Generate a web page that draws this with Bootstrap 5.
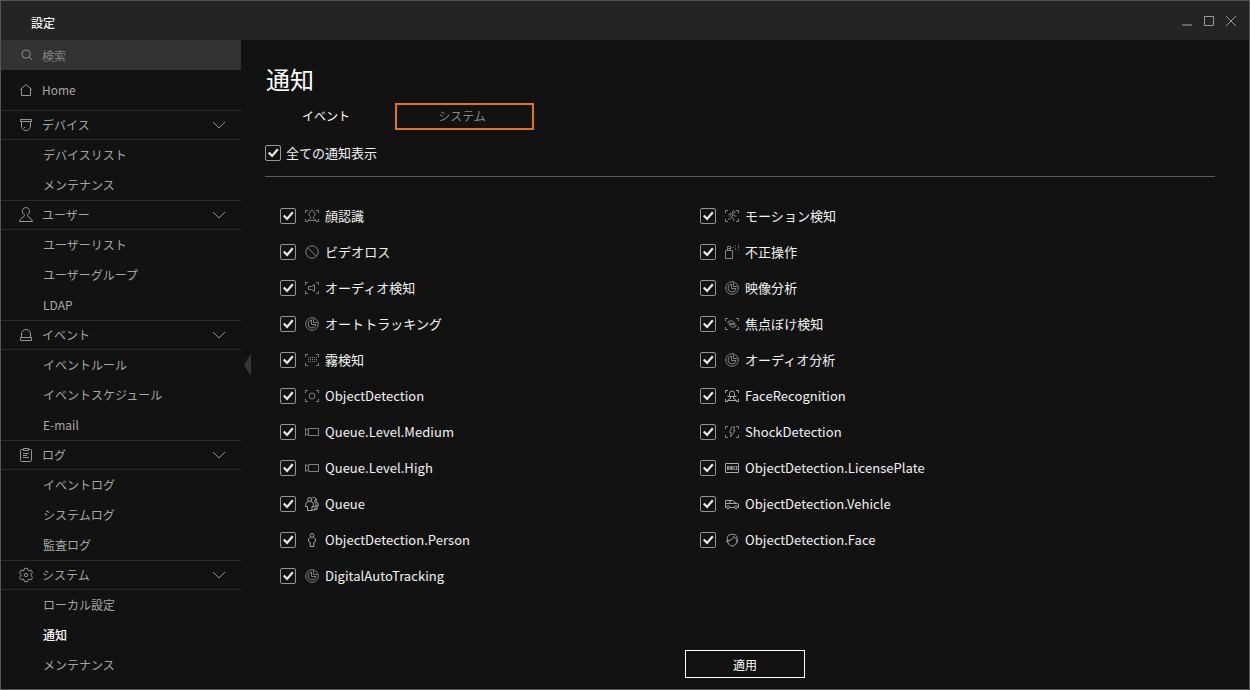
<!DOCTYPE html>
<html lang="ja" data-bs-theme="dark">
<head>
<meta charset="utf-8">
<meta name="viewport" content="width=device-width, initial-scale=1">
<title>設定</title>
<link href="https://cdn.jsdelivr.net/npm/bootstrap@5.3.0/dist/css/bootstrap.min.css" rel="stylesheet">
<style>
  body { font-family: "Noto Sans CJK JP", sans-serif; font-size: 12px; line-height: 18px; background: #121212; color: #f2f2f2; }
  .window { height: 690px; border: 1px solid #555; overflow: hidden; }
  .titlebar { height: 39px; background: #242424; padding: 4px 12px 0 30px; }
  .titlebar svg { width: 12px; height: 12px; margin-top: -3px; }
  .sidebar { width: 240px; color: #a6a6a6; }
  .search { height: 30px; background: #333; color: #828282; padding-top: 1px; }
  .search .ico { margin: -3px 0 0 1px; width: 15px; height: 15px; }
  .home { height: 40px; }
  .search, .home, .group-head { padding-left: 17px; }
  .group-head { height: 30px; border-top: 1px solid #2a2a2a; border-bottom: 1px solid #2a2a2a; padding-right: 14px; }
  .sub { height: 30px; padding: 0 0 0 42px; line-height: 30px; color: #a6a6a6; }
  .sub.active { color: #fff; font-weight: 500; }
  .ico { width: 16px; height: 16px; fill: none; stroke: #969696; stroke-width: 1; flex: none; }
  .page { position: relative; padding: 24px 34px 0 24px; }
  .handle { position: absolute; left: 3px; top: 314px; width: 7px; height: 22px; background: #363636; clip-path: polygon(0 50%, 100% 0, 100% 100%); }
  h1 { font-size: 24px; line-height: 30px; font-weight: 400; margin: 0 0 9px 1px; }
  .tabs { margin-left: -9px; }
  .tabs .nav-link { width: 139px; height: 27px; padding: 0 0 0 1px; line-height: 25px; text-align: center; color: #fff; border-radius: 0; font-weight: 400; }
  .tabs .nav-link.picked { border: 2px solid #e3740f; line-height: 21px; color: #858585; padding: 0 5px 0 0; }
  .check-all { height: 47px; padding-bottom: 1px; border-bottom: 1px solid #5b5b5b; font-size: 13px; }
  .check-all span { padding-left: 5px; }
  .form-check-input { width: 16px; height: 16px; margin: 0; border: 1px solid #969696; border-radius: 2px !important; background-color: #121212 !important; flex: none; }
  .form-check-input:checked { border-color: #969696; background-size: 16px 16px; background-position: -1px -1px; background-image: url("data:image/svg+xml,%3csvg xmlns='http://www.w3.org/2000/svg' viewBox='0 0 16 16'%3e%3cpath d='M3.700 7.500l3.400 3.400 5.700-6.600' fill='none' stroke='%23e6e6e6' stroke-width='2.300'/%3e%3c/svg%3e"); }
  .events { padding: 21px 0 0 15px; font-size: 13px; }
  .event-col { width: 420px; }
  .event { height: 36px; letter-spacing: .045px; }
  .event .ico { margin: 0 5px 0 8px; stroke: #808080; }
  .event .ico.bright { stroke: #a8a8a8; }
  .apply { width: 120px; height: 28px; padding: 0; line-height: 27px; border: 1px solid #fff; border-radius: 0; color: #fff; font-size: 12px; margin: 56px 0 0 420px; }
</style>
</head>
<body>
<svg class="d-none">
  <symbol id="home" viewBox="0 0 16 16"><path d="M2.300 7.500L8 2.500l5.700 5M3.500 6.500v7h9v-7"/></symbol>
  <symbol id="device" viewBox="0 0 16 16"><path d="M2.500 2.500h11v2h-11zM3.500 4.500v4.500a4.500 4.500 0 0 0 9 0V4.500M6 10.500h1"/></symbol>
  <symbol id="user" viewBox="0 0 16 16"><path d="M6.500 8.500V7.700a3.700 3.700 0 1 1 3 0v.8c.3 2 4.700 2.500 5 6h-13c.3-3.500 4.700-4 5-6z"/></symbol>
  <symbol id="alarm" viewBox="0 0 16 16"><path d="M3.500 10.500V7a4.500 4.500 0 0 1 9 0v3.500M2.500 10.500h11v3h-11z"/></symbol>
  <symbol id="log" viewBox="0 0 16 16"><path d="M5 2.500H3.500a1 1 0 0 0-1 1v10a1 1 0 0 0 1 1h9a1 1 0 0 0 1-1v-10a1 1 0 0 0-1-1H11M5.500 1.500h5v2h-5zM5 6.500h6M5 8.500h4M5 10.500h6"/></symbol>
  <symbol id="gear" viewBox="0 0 16 16"><path d="M6.500 1.300h3l.5 1.900 1.100.6 1.900-.7 1.600 2.600-1.500 1.400v1.800l1.500 1.400-1.600 2.600-1.900-.7-1.100.6-.5 1.900h-3L6 12.800l-1.100-.6-1.900.7-1.600-2.600 1.500-1.400V7.100L1.400 5.700 3 3.100l1.900.7L6 3.200z"/><circle cx="8" cy="8" r="1.700"/></symbol>
  <symbol id="search" viewBox="0 0 16 16"><circle cx="7.500" cy="7.500" r="4.300"/><path d="M10.700 10.700l3.300 3.300"/></symbol>
  <symbol id="chev" viewBox="0 0 16 16"><path d="M2 5l6 6 6-6"/></symbol>
  <symbol id="frame" viewBox="0 0 16 16"><path d="M4 2.500H1.500V5M12 2.500h2.500V5M1.500 11v2.500H4M14.500 11v2.500H12M1.500 7.200v1.600M14.500 7.200v1.600"/></symbol>
  <symbol id="corners" viewBox="0 0 16 16"><path d="M4 2.500H1.500V5M12 2.500h2.500V5M1.500 11v2.500H4M14.500 11v2.500H12"/></symbol>
  <symbol id="face" viewBox="0 0 16 16"><use href="#corners"/><path d="M6.700 9a3 3.300 0 1 1 2.600 0v1c0 .8 2.200.8 2.700 2.500H4c.5-1.700 2.700-1.700 2.700-2.500z"/></symbol>
  <symbol id="loss" viewBox="0 0 16 16"><circle cx="8" cy="8" r="6.200"/><path d="M3.600 3.600l8.800 8.800"/></symbol>
  <symbol id="audio" viewBox="0 0 16 16"><use href="#corners"/><path d="M10.500 4.500v7L7.500 9.500h-3v-3h3z"/></symbol>
  <symbol id="track" viewBox="0 0 16 16"><circle cx="8" cy="8" r="6.300"/><path d="M7.500 4a4 4 0 1 0 4.500 4.500H7.500zM9.500 2.500v4H13.500"/></symbol>
  <symbol id="fog" viewBox="0 0 16 16"><use href="#corners"/><path d="M4 5.500h9M4 7.500h9M4 9.500h9" stroke-dasharray="1 1"/></symbol>
  <symbol id="object" viewBox="0 0 16 16"><use href="#corners"/><circle cx="8" cy="8" r="2.900"/></symbol>
  <symbol id="camera" viewBox="0 0 16 16"><path d="M4.500 4.500h10v7h-10zM4.500 6.500l-3-2v7l3-2"/></symbol>
  <symbol id="queue" viewBox="0 0 16 16"><circle cx="5.700" cy="3.500" r="2"/><path d="M4.500 5.500c-2.300.5-3 2-3 5h2v4h4.500v-4h1.500c0-3-.5-4.500-2.500-5M8 2.200a2 2 0 1 1 2.200 3M10 5.500c1.800.5 2.300 2.300 2.200 4.500H11v4H8M11 2.300c1.600 0 2 2 1 3 1.900 1 2.400 3 2.200 4.700H13v3.500h-2"/></symbol>
  <symbol id="person" viewBox="0 0 16 16"><circle cx="8" cy="3.500" r="1.900"/><path d="M6.500 5.500C5 6 4.500 7 4.500 9.500l1.700 1v4h3.600v-4l1.700-1c0-2.500-.5-3.500-2-4"/></symbol>
  <symbol id="motion" viewBox="0 0 16 16"><use href="#corners"/><circle cx="9.700" cy="4.200" r="1.300"/><path d="M4.500 6.500L7 5.500l2 1-1.500 2.800 2.200 1.200v2.500M7.500 9.500l-1 1.500H4M9 6.500l1.500 1.500h2M6.500 6.500L5.700 8.700"/></symbol>
  <symbol id="spray" viewBox="0 0 16 16"><path d="M1.500 6.500h7v8h-7zM3.500 6.500v-4h3v4M3.500 4.500h3"/><path d="M8.500 3.500h1.200M11 2h1M11 5h1M14 1.500h1M14 3.500h1M14 5.700h1"/></symbol>
  <symbol id="defocus" viewBox="0 0 16 16"><use href="#corners"/><path d="M3.500 6.500C5 4 9 4 11 7.500H7.500L3.500 6.500M5 8.500h3.500l4 1C11 12 7 12 5 8.500"/></symbol>
  <symbol id="recog" viewBox="0 0 16 16"><use href="#corners"/><path d="M5.500 8V5.500a2.500 2.500 0 0 1 5 0V8M3.500 8.500h9M6.500 8.500v2c-1.500.5-2.500 1-3 2h9c-.5-1-1.500-1.500-3-2v-2"/></symbol>
  <symbol id="shock" viewBox="0 0 16 16"><use href="#corners"/><path d="M7.500 3h3.200L9.500 6.500H11L6.500 13l.7-4.500H5.800z"/></symbol>
  <symbol id="plate" viewBox="0 0 16 16"><path d="M1.500 3.500h13v9h-13z"/><path d="M3.500 10V6.500H5V10M3.500 8.500H5M6.700 6.500v3h1.600v-3zM6.500 8H8M10 6V10M11.500 6.500H13v1.500L11.500 9.500H13.500"/></symbol>
  <symbol id="car" viewBox="0 0 16 16"><path d="M2.500 11.500h-1V4.500H9l2.500 2.500 3 1v3.500h-1M5.500 11.500h5M1.500 7.500H12M6 4.500v3"/><circle cx="4" cy="11.300" r="1.500"/><circle cx="12" cy="11.300" r="1.500"/></symbol>
  <symbol id="head" viewBox="0 0 16 16"><path d="M3.500 8C2.500 4 5 2.300 8.500 2.300S13.500 4 13 8c-.3 3.500-2 6-4.700 6S4 11.500 3.500 8zM4 8.500c3 0 5-1.500 6-4 .7 1.500 1.500 2 2.500 2.500M3.500 8c-1.200.8-.7 2.500.6 3M13 8c1.200.8.5 2.500-.7 3"/></symbol>
</svg>

<div class="window d-flex flex-column">
  <header class="titlebar d-flex align-items-center">
    <span class="me-auto fw-medium">設定</span>
    <div class="d-flex" style="gap:10px">
      <svg viewBox="0 0 12 12"><path d="M1 9h10v2H1z" fill="#666"/></svg>
      <svg viewBox="0 0 12 12"><path d="M1.500 1.500h9v9h-9z" fill="none" stroke="#999"/></svg>
      <svg viewBox="0 0 12 12"><path d="M1 1l10 10M11 1L1 11" fill="none" stroke="#999"/></svg>
    </div>
  </header>
  <div class="d-flex flex-grow-1">
    <nav class="sidebar flex-shrink-0">
      <div class="search d-flex align-items-center gap-2"><svg class="ico"><use href="#search"/></svg>検索</div>
      <div class="home d-flex align-items-center gap-2"><svg class="ico"><use href="#home"/></svg>Home</div>
      <div class="group-head d-flex align-items-center gap-2"><svg class="ico"><use href="#device"/></svg><span>デバイス</span><svg class="ico ms-auto"><use href="#chev"/></svg></div>
      <a class="nav-link sub">デバイスリスト</a><a class="nav-link sub">メンテナンス</a>
      <div class="group-head d-flex align-items-center gap-2"><svg class="ico"><use href="#user"/></svg><span>ユーザー</span><svg class="ico ms-auto"><use href="#chev"/></svg></div>
      <a class="nav-link sub">ユーザーリスト</a><a class="nav-link sub">ユーザーグループ</a><a class="nav-link sub">LDAP</a>
      <div class="group-head d-flex align-items-center gap-2"><svg class="ico"><use href="#alarm"/></svg><span>イベント</span><svg class="ico ms-auto"><use href="#chev"/></svg></div>
      <a class="nav-link sub">イベントルール</a><a class="nav-link sub">イベントスケジュール</a><a class="nav-link sub">E-mail</a>
      <div class="group-head d-flex align-items-center gap-2"><svg class="ico"><use href="#log"/></svg><span>ログ</span><svg class="ico ms-auto"><use href="#chev"/></svg></div>
      <a class="nav-link sub">イベントログ</a><a class="nav-link sub">システムログ</a><a class="nav-link sub">監査ログ</a>
      <div class="group-head d-flex align-items-center gap-2"><svg class="ico"><use href="#gear"/></svg><span>システム</span><svg class="ico ms-auto"><use href="#chev"/></svg></div>
      <a class="nav-link sub">ローカル設定</a><a class="nav-link sub active">通知</a><a class="nav-link sub">メンテナンス</a>
    </nav>
    <main class="page flex-grow-1">
      <div class="handle"></div>
      <h1>通知</h1>
      <div class="nav tabs"><a class="nav-link">イベント</a><a class="nav-link picked">システム</a></div>
      <label class="check-all d-flex align-items-center"><input class="form-check-input" type="checkbox" checked><span>全ての通知表示</span></label>
      <div class="events d-flex">
        <div class="event-col">
          <label class="event d-flex align-items-center"><input class="form-check-input" type="checkbox" checked><svg class="ico"><use href="#face"/></svg>顔認識</label>
          <label class="event d-flex align-items-center"><input class="form-check-input" type="checkbox" checked><svg class="ico"><use href="#loss"/></svg>ビデオロス</label>
          <label class="event d-flex align-items-center"><input class="form-check-input" type="checkbox" checked><svg class="ico"><use href="#audio"/></svg>オーディオ検知</label>
          <label class="event d-flex align-items-center"><input class="form-check-input" type="checkbox" checked><svg class="ico"><use href="#track"/></svg>オートトラッキング</label>
          <label class="event d-flex align-items-center"><input class="form-check-input" type="checkbox" checked><svg class="ico"><use href="#fog"/></svg>霧検知</label>
          <label class="event d-flex align-items-center"><input class="form-check-input" type="checkbox" checked><svg class="ico"><use href="#object"/></svg>ObjectDetection</label>
          <label class="event d-flex align-items-center"><input class="form-check-input" type="checkbox" checked><svg class="ico"><use href="#camera"/></svg>Queue.Level.Medium</label>
          <label class="event d-flex align-items-center"><input class="form-check-input" type="checkbox" checked><svg class="ico"><use href="#camera"/></svg>Queue.Level.High</label>
          <label class="event d-flex align-items-center"><input class="form-check-input" type="checkbox" checked><svg class="ico bright"><use href="#queue"/></svg>Queue</label>
          <label class="event d-flex align-items-center"><input class="form-check-input" type="checkbox" checked><svg class="ico bright"><use href="#person"/></svg>ObjectDetection.Person</label>
          <label class="event d-flex align-items-center"><input class="form-check-input" type="checkbox" checked><svg class="ico"><use href="#track"/></svg>DigitalAutoTracking</label>
        </div>
        <div class="event-col">
          <label class="event d-flex align-items-center"><input class="form-check-input" type="checkbox" checked><svg class="ico"><use href="#motion"/></svg>モーション検知</label>
          <label class="event d-flex align-items-center"><input class="form-check-input" type="checkbox" checked><svg class="ico"><use href="#spray"/></svg>不正操作</label>
          <label class="event d-flex align-items-center"><input class="form-check-input" type="checkbox" checked><svg class="ico"><use href="#track"/></svg>映像分析</label>
          <label class="event d-flex align-items-center"><input class="form-check-input" type="checkbox" checked><svg class="ico"><use href="#defocus"/></svg>焦点ぼけ検知</label>
          <label class="event d-flex align-items-center"><input class="form-check-input" type="checkbox" checked><svg class="ico"><use href="#track"/></svg>オーディオ分析</label>
          <label class="event d-flex align-items-center"><input class="form-check-input" type="checkbox" checked><svg class="ico bright"><use href="#recog"/></svg>FaceRecognition</label>
          <label class="event d-flex align-items-center"><input class="form-check-input" type="checkbox" checked><svg class="ico"><use href="#shock"/></svg>ShockDetection</label>
          <label class="event d-flex align-items-center"><input class="form-check-input" type="checkbox" checked><svg class="ico bright"><use href="#plate"/></svg>ObjectDetection.LicensePlate</label>
          <label class="event d-flex align-items-center"><input class="form-check-input" type="checkbox" checked><svg class="ico bright"><use href="#car"/></svg>ObjectDetection.Vehicle</label>
          <label class="event d-flex align-items-center"><input class="form-check-input" type="checkbox" checked><svg class="ico bright"><use href="#head"/></svg>ObjectDetection.Face</label>
        </div>
      </div>
      <button class="btn apply">適用</button>
    </main>
  </div>
</div>
<script src="https://cdn.jsdelivr.net/npm/bootstrap@5.3.0/dist/js/bootstrap.bundle.min.js"></script>
</body>
</html>
